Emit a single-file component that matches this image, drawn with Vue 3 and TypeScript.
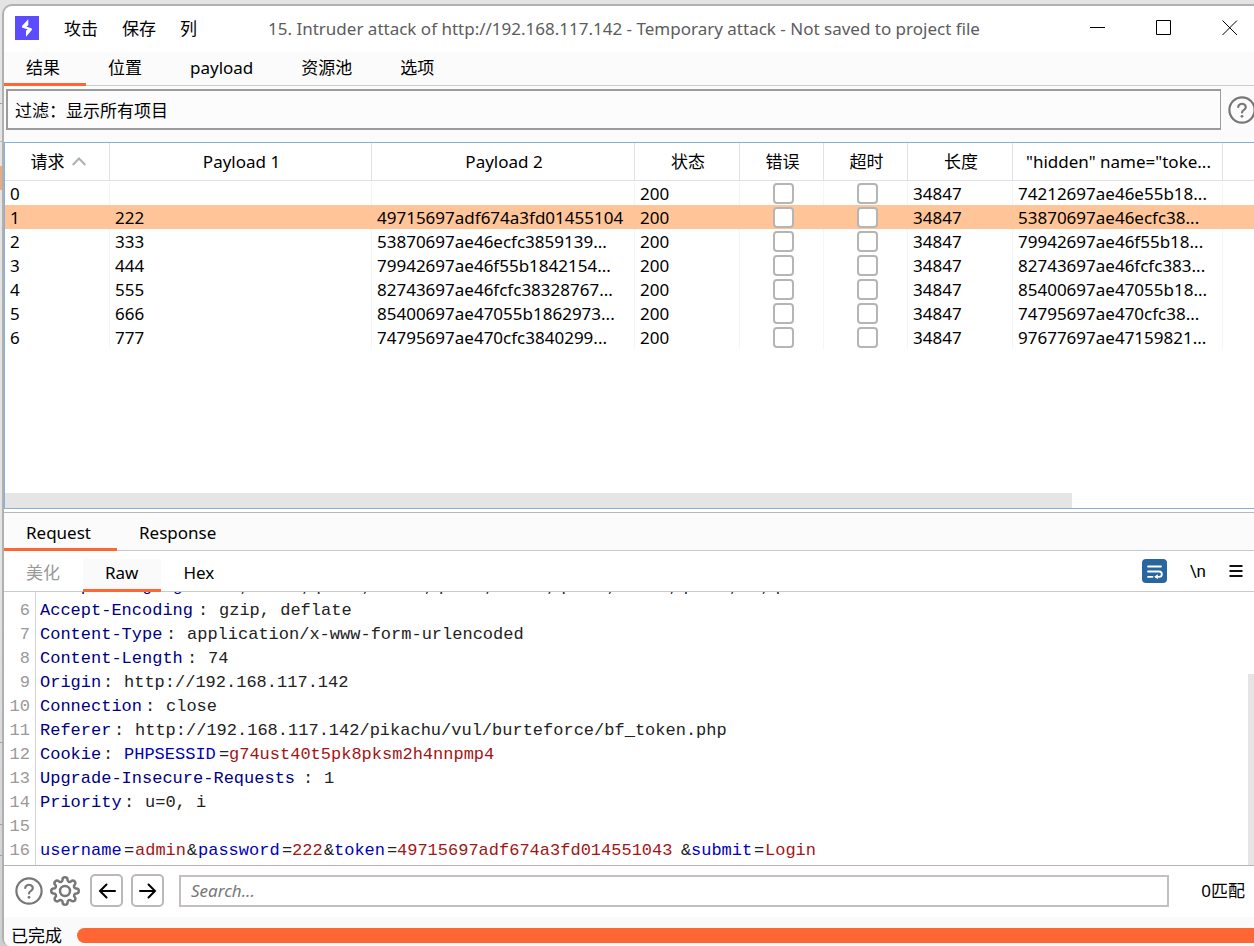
<script setup lang="ts">
import { ref } from 'vue'

interface Row {
  id: number
  p1: string
  p2: string
  status: string
  error: boolean
  timeout: boolean
  length: string
  token: string
}

interface Token {
  kind: 'name' | 'param' | 'value' | 'text'
  text: string
}

interface Line {
  no: number
  tokens: Token[]
}

const mainTabs = ['结果', '位置', 'payload', '资源池', '选项']
const activeMain = ref('结果')
const messageTabs = ['Request', 'Response']
const activeMessage = ref('Request')
const viewTabs = ['美化', 'Raw', 'Hex']
const activeView = ref('Raw')
const selected = ref(1)
const search = ref('')

const columns = ['请求', 'Payload 1', 'Payload 2', '状态', '错误', '超时', '长度', '"hidden" name="toke...', '']

function row(id: number, p1: string, p2: string, token: string): Row {
  return { id, p1, p2, status: '200', error: false, timeout: false, length: '34847', token }
}

const rows = ref<Row[]>([
  row(0, '', '', '74212697ae46e55b18...'),
  row(1, '222', '49715697adf674a3fd01455104', '53870697ae46ecfc38...'),
  row(2, '333', '53870697ae46ecfc3859139...', '79942697ae46f55b18...'),
  row(3, '444', '79942697ae46f55b1842154...', '82743697ae46fcfc383...'),
  row(4, '555', '82743697ae46fcfc38328767...', '85400697ae47055b18...'),
  row(5, '666', '85400697ae47055b1862973...', '74795697ae470cfc38...'),
  row(6, '777', '74795697ae470cfc3840299...', '97677697ae47159821...'),
])

const t = (kind: Token['kind'], text: string): Token => ({ kind, text })
const header = (no: number, name: string, value: string): Line => ({
  no,
  tokens: [t('name', name), t('text', ': '), t('text', value)],
})

const lines: Line[] = [
  header(5, 'Accept-Language', 'zh,zh-CN;q=0.8,zh-TW;q=0.7,zh-HK;q=0.5,en-US;q=0.3,en;q=0.2'),
  header(6, 'Accept-Encoding', 'gzip, deflate'),
  header(7, 'Content-Type', 'application/x-www-form-urlencoded'),
  header(8, 'Content-Length', '74'),
  header(9, 'Origin', 'http://192.168.117.142'),
  header(10, 'Connection', 'close'),
  header(11, 'Referer', 'http://192.168.117.142/pikachu/vul/burteforce/bf_token.php'),
  {
    no: 12,
    tokens: [
      t('name', 'Cookie'),
      t('text', ': '),
      t('param', 'PHPSESSID'),
      t('text', '='),
      t('value', 'g74ust40t5pk8pksm2h4nnpmp4'),
    ],
  },
  header(13, 'Upgrade-Insecure-Requests', '1'),
  header(14, 'Priority', 'u=0, i'),
  { no: 15, tokens: [] },
  {
    no: 16,
    tokens: [
      t('param', 'username'),
      t('text', '='),
      t('value', 'admin'),
      t('text', '&'),
      t('param', 'password'),
      t('text', '='),
      t('value', '222'),
      t('text', '&'),
      t('param', 'token'),
      t('text', '='),
      t('value', '49715697adf674a3fd014551043'),
      t('text', '&'),
      t('param', 'submit'),
      t('text', '='),
      t('value', 'Login'),
    ],
  },
]

// Two editor cells span 21px; each token snaps to the whole pixel nearest its column.
const column = (chars: number) => Math.round((chars * 21) / 2)
function advance(line: Line, index: number) {
  const start = line.tokens.slice(0, index).reduce((sum, k) => sum + k.text.length, 0)
  const end = start + line.tokens[index].text.length
  return { width: `${column(end) - column(start)}px` }
}
</script>

<template>
  <div class="desktop">
    <main class="window">
      <header class="titlebar">
        <svg class="logo" viewBox="0 0 24 24" aria-hidden="true">
          <rect width="24" height="24" fill="#5b4dff" />
          <path d="M13.3 3.3v6l-2 1.300 5.500 2v1.500L11 20.700v-6l1.800-1.100-5.800-2.200v-1.300z" fill="#fff" />
        </svg>
        <nav class="menu">
          <button type="button">攻击</button>
          <button type="button">保存</button>
          <button type="button">列</button>
        </nav>
        <h1>15. Intruder attack of http://192.168.117.142 - Temporary attack - Not saved to project file</h1>
        <div class="winctl">
          <button type="button" aria-label="Minimize">
            <svg viewBox="0 0 16 16"><path d="M0 7.5h15" /></svg>
          </button>
          <button type="button" aria-label="Maximize">
            <svg viewBox="0 0 16 16"><path d="M.5.5h14v14H.5z" /></svg>
          </button>
          <button type="button" aria-label="Close">
            <svg viewBox="0 0 16 16"><path d="M.5.5l14.5 14.5M15 .5L.5 15" /></svg>
          </button>
        </div>
      </header>

      <nav class="tabs main-tabs">
        <button
          v-for="tab in mainTabs"
          :key="tab"
          type="button"
          :class="{ active: tab === activeMain }"
          @click="activeMain = tab"
        >{{ tab }}</button>
      </nav>

      <div class="filter-row">
        <button type="button" class="filter">过滤：显示所有项目</button>
        <button type="button" class="icon-btn" aria-label="Help">
          <svg class="help" viewBox="0 0 28 28">
            <circle cx="14" cy="14" r="12.6" />
            <path d="M10.2 11a3.8 3.3 0 1 1 5.8 2.900c-1.300.8-2 1.300-2 2.600" />
            <circle class="dot" cx="14" cy="20.3" r="1.4" />
          </svg>
        </button>
      </div>

      <section class="results">
        <table>
          <colgroup>
            <col class="w-first" /><col class="w-pay1" /><col class="w-pay2" /><col class="w-req" />
            <col class="w-chk" /><col class="w-chk" /><col class="w-req" /><col class="w-tok" /><col />
          </colgroup>
          <thead>
            <tr>
              <th v-for="(c, i) in columns" :key="i" scope="col">
                <span>{{ c }}</span>
                <svg v-if="i === 0" class="sort" viewBox="0 0 14 9" aria-hidden="true">
                  <path d="M.7 8L7 1.5 13.3 8" />
                </svg>
              </th>
            </tr>
          </thead>
          <tbody>
            <tr v-for="r in rows" :key="r.id" :class="{ selected: r.id === selected }" @click="selected = r.id">
              <td>{{ r.id }}</td>
              <td>{{ r.p1 }}</td>
              <td>{{ r.p2 }}</td>
              <td>{{ r.status }}</td>
              <td class="check"><input v-model="r.error" type="checkbox" :aria-label="'错误 ' + r.id" /></td>
              <td class="check"><input v-model="r.timeout" type="checkbox" :aria-label="'超时 ' + r.id" /></td>
              <td>{{ r.length }}</td>
              <td>{{ r.token }}</td>
              <td></td>
            </tr>
          </tbody>
        </table>
        <div class="hscroll"></div>
      </section>

      <nav class="tabs message-tabs">
        <button
          v-for="tab in messageTabs"
          :key="tab"
          type="button"
          :class="{ active: tab === activeMessage }"
          @click="activeMessage = tab"
        >{{ tab }}</button>
      </nav>

      <div class="view-bar">
        <nav class="view-tabs">
          <button
            v-for="(tab, i) in viewTabs"
            :key="tab"
            type="button"
            :disabled="i === 0"
            :class="{ active: tab === activeView }"
            @click="activeView = tab"
          >{{ tab }}</button>
        </nav>
        <div class="view-tools">
          <button type="button" class="wrap" aria-label="Wrap lines">
            <svg viewBox="0 0 25 24">
              <path d="M6 7.5h13M6 12.5h11.2a2.6 2.6 0 0 1 0 5.3H14M6 17.8h4.5" />
              <path class="solid" d="M12.2 17.8l3.6-2.5v5z" />
            </svg>
          </button>
          <button type="button" class="newline">\n</button>
          <button type="button" aria-label="Menu">
            <svg class="burger" viewBox="0 0 14 12"><path d="M.5 1h13M.5 6h13M.5 11h13" /></svg>
          </button>
        </div>
      </div>

      <section class="editor">
        <div class="code">
          <div v-for="l in lines" :key="l.no" class="line">
            <span class="no">{{ l.no }}</span>
            <code><span
              v-for="(k, i) in l.tokens"
              :key="i"
              :class="k.kind"
              :style="advance(l, i)"
            >{{ k.text }}</span></code>
          </div>
        </div>
        <div class="vscroll"><div></div></div>
      </section>

      <form class="searchbar" @submit.prevent>
        <button type="button" class="icon-btn" aria-label="Help">
          <svg class="help" viewBox="0 0 28 28">
            <circle cx="14" cy="14" r="12.6" />
            <path d="M10.2 11a3.8 3.3 0 1 1 5.8 2.900c-1.300.8-2 1.300-2 2.600" />
            <circle class="dot" cx="14" cy="20.3" r="1.4" />
          </svg>
        </button>
        <button type="button" class="icon-btn" aria-label="Settings">
          <svg class="gear" viewBox="0 0 24 24">
            <circle cx="12" cy="12" r="4" />
            <path d="M19.4 15a1.65 1.65 0 0 0 .33 1.82l.06.06a2 2 0 1 1-2.83 2.83l-.06-.06a1.65 1.65 0 0 0-1.82-.33 1.65 1.65 0 0 0-1 1.51V21a2 2 0 0 1-4 0v-.09A1.65 1.65 0 0 0 9 19.4a1.65 1.65 0 0 0-1.82.33l-.06.06a2 2 0 1 1-2.83-2.83l.06-.06a1.65 1.65 0 0 0 .33-1.82 1.65 1.65 0 0 0-1.51-1H3a2 2 0 0 1 0-4h.09A1.65 1.65 0 0 0 4.6 9a1.65 1.65 0 0 0-.33-1.82l-.06-.06a2 2 0 1 1 2.83-2.83l.06.06a1.65 1.65 0 0 0 1.82.33H9a1.65 1.65 0 0 0 1-1.51V3a2 2 0 0 1 4 0v.09a1.65 1.65 0 0 0 1 1.51 1.65 1.65 0 0 0 1.82-.33l.06-.06a2 2 0 1 1 2.83 2.83l-.06.06a1.65 1.65 0 0 0-.33 1.82V9a1.65 1.65 0 0 0 1.51 1H21a2 2 0 0 1 0 4h-.09a1.65 1.65 0 0 0-1.51 1z" />
          </svg>
        </button>
        <button type="button" class="step" aria-label="Previous match">
          <svg viewBox="0 0 18 18"><path d="M17 9H2M8.5 2.5L2 9l6.5 6.5" /></svg>
        </button>
        <button type="button" class="step" aria-label="Next match">
          <svg viewBox="0 0 18 18"><path d="M1 9h15M9.5 2.5L16 9l-6.5 6.5" /></svg>
        </button>
        <input v-model="search" type="text" placeholder="Search..." aria-label="Search" />
        <output>0匹配</output>
      </form>

      <footer class="status">
        <span id="status-label">已完成</span>
        <div class="bar" role="progressbar" aria-labelledby="status-label" aria-valuenow="100"></div>
      </footer>
    </main>
  </div>
</template>

<style>
body {
  background: #e4e4e4;
  overflow: hidden;
}
</style>

<style scoped>
.desktop {
  box-sizing: border-box;
  min-height: 100vh;
  padding: 4px 0 0 2px;
  display: flex;
  font-family: "Noto Sans", "Noto Sans CJK SC", sans-serif;
  font-size: 17px;
  line-height: 24px;
  color: #000;
  background:
    linear-gradient(#e3ad87, #e3ad87) 0 166px / 4px 24px no-repeat,
    linear-gradient(#a0a0a0, #a0a0a0) 0 103px / 4px 1px no-repeat,
    linear-gradient(#b5b9b8, #b5b9b8) 0 141px / 4px 1px no-repeat,
    linear-gradient(#a0a0a0, #a0a0a0) 0 742px / 4px 1px no-repeat,
    linear-gradient(#a0a0a0, #a0a0a0) 0 824px / 4px 1px no-repeat,
    linear-gradient(#a0a0a0, #a0a0a0) 0 855px / 4px 1px no-repeat,
    linear-gradient(#e4e4e4 0 60%, #cfcfcf);
}
button,
input {
  font: inherit;
  color: inherit;
}
button {
  padding: 0;
  border: 0;
  background: none;
}
svg {
  display: block;
}
.window {
  flex: 1;
  min-width: 0;
  display: flex;
  flex-direction: column;
  overflow: hidden;
  background: #fff;
  border: solid #b0b0b0;
  border-width: 2px 0 0 2px;
  border-radius: 10px 0 0 8px;
}
.titlebar {
  height: 46px;
  padding-left: 11px;
  display: flex;
  align-items: center;
}
.logo {
  width: 24px;
  height: 24px;
  margin-bottom: 2px;
}
.menu {
  display: flex;
  gap: 24px;
  margin-left: 25px;
}
h1 {
  flex: 1;
  margin: 0 0 0 71px;
  font-size: 17px;
  font-weight: 400;
  white-space: nowrap;
  color: #5c5c5c;
}
.winctl {
  display: flex;
  gap: 50px;
  padding: 0 16px 2px 0;
}
.winctl svg {
  width: 16px;
  height: 16px;
  fill: none;
  stroke: #000;
}
.tabs {
  display: flex;
  background: #fbfbfb;
  border-bottom: 1px solid #c8cccb;
}
.tabs button {
  height: 21px;
  padding: 4px 26px 6px 22px;
  border-bottom: 3px solid transparent;
  margin-bottom: -1px;
  box-sizing: content-box;
  line-height: 24px;
}
.tabs .active {
  border-bottom-color: #ff6633;
}
.filter-row {
  display: flex;
  align-items: center;
  gap: 7px;
  padding: 3px 0 12px 2px;
  margin-right: -2px;
  background: #fbfbfb;
}
.filter {
  flex: 1;
  height: 41px;
  padding: 2px 7px 0;
  text-align: left;
  border: 2px solid #9c9c9c;
  border-right-width: 1px;
  background: #fcfcfc;
}
.icon-btn {
  flex: none;
}
.help,
.gear {
  width: 28px;
  height: 28px;
  fill: none;
  stroke: #777;
  stroke-width: 2.2;
  stroke-linecap: round;
}
.gear {
  width: 30px;
  height: 30px;
  stroke-width: 2;
}
.dot {
  fill: #777;
  stroke: none;
}
.results {
  flex: 365 1 0;
  min-height: 200px;
  display: flex;
  flex-direction: column;
  justify-content: space-between;
  border: 1px solid #86b0dc;
  border-right: 0;
}
table {
  width: 100%;
  table-layout: fixed;
  border-collapse: separate;
  border-spacing: 0;
}
.w-first { width: 105px; }
.w-pay1 { width: 262px; }
.w-pay2 { width: 263px; }
.w-req { width: 105px; }
.w-chk { width: 84px; }
.w-tok { width: 210px; }
th {
  height: 37px;
  padding: 0 0 0 2px;
  font-weight: 400;
  white-space: nowrap;
  border-right: 1px solid #e2e2e2;
  border-bottom: 1px solid #e2e2e2;
}
th:last-child,
td:last-child {
  border-right: 0;
}
.sort {
  display: inline-block;
  width: 14px;
  height: 9px;
  margin-left: 7px;
  vertical-align: 2px;
  fill: none;
  stroke: #b0b0b0;
  stroke-width: 2;
}
td {
  height: 22px;
  padding: 2px 0 0 5px;
  line-height: 22px;
  white-space: nowrap;
  border-right: 1px solid #f5f5f5;
}
.check {
  height: 24px;
  padding: 0 0 0 4px;
}
.check input {
  appearance: none;
  display: block;
  box-sizing: border-box;
  width: 21px;
  height: 21px;
  margin: 0 auto;
  border: 2px solid #b5b5b5;
  border-radius: 4px;
  background: #fff;
}
.selected td {
  background: #ffc599;
  border-right-color: #ffc599;
}
.hscroll {
  width: 1067px;
  max-width: 86%;
  height: 15px;
  background: #e5e5e5;
}
.message-tabs {
  margin-top: 3px;
  border-top: 1px solid #b8b8b8;
}
.message-tabs button {
  padding: 8px 26px 6px 22px;
}
.view-bar {
  display: flex;
  justify-content: space-between;
  align-items: center;
  height: 40px;
  border-bottom: 1px solid #c8cccb;
}
.view-tabs {
  display: flex;
  align-self: flex-end;
}
.view-tabs button {
  height: 33px;
  margin-bottom: -1px;
  padding: 0 23px 2px 22px;
  border-bottom: 3px solid transparent;
}
.view-tabs .active {
  background: #fafafa;
  border-bottom-color: #ff6633;
}
.view-tabs button:disabled {
  color: #999;
}
.view-tools {
  display: flex;
  align-items: center;
  gap: 23px;
  padding-right: 11px;
}
.wrap {
  border-radius: 4px;
  background: #28669f;
}
.wrap svg {
  width: 25px;
  height: 24px;
  fill: none;
  stroke: #fff;
  stroke-width: 1.8;
  stroke-linecap: round;
}
.wrap .solid {
  fill: #fff;
  stroke: none;
}
.newline {
  font-family: Roboto, sans-serif;
}
.burger {
  width: 14px;
  height: 12px;
  fill: none;
  stroke: #111;
  stroke-width: 2;
}
.editor {
  flex: 273 1 0;
  min-height: 120px;
  display: flex;
  border-bottom: 1px solid #b8b4b4;
}
.code {
  flex: 1;
  min-width: 0;
  display: flex;
  flex-direction: column;
  justify-content: flex-end;
  overflow: hidden;
  font-family: "Liberation Mono", monospace;
}
.line {
  flex: none;
  display: flex;
  height: 24px;
  line-height: 26px;
}
.line:last-child {
  height: 27px;
}
.no {
  width: 26px;
  padding-right: 5px;
  text-align: right;
  color: #999;
  border-right: 1px solid #d5d5d5;
}
code {
  padding-left: 4px;
  display: flex;
  font: inherit;
  white-space: pre;
}
.name { color: #00007f; }
.param { color: #0000b8; }
.value { color: #a31515; }
.text { color: #222; }
.vscroll {
  width: 6px;
  display: flex;
  flex-direction: column;
  justify-content: flex-end;
}
.vscroll div {
  height: 70%;
  background: #e5e5e5;
}
.searchbar {
  height: 51px;
  padding: 0 9px 2px 11px;
  box-sizing: border-box;
  display: flex;
  align-items: center;
}
.searchbar .icon-btn + .icon-btn {
  margin-left: 7px;
}
.step {
  box-sizing: border-box;
  width: 33px;
  height: 33px;
  margin-left: 10px;
  display: grid;
  place-items: center;
  border: 2px solid #bdb8b8;
  border-radius: 5px;
}
.step + .step {
  margin-left: 8px;
}
.step svg {
  width: 18px;
  height: 18px;
  fill: none;
  stroke: #000;
  stroke-width: 2;
  stroke-linecap: round;
}
.searchbar input {
  box-sizing: border-box;
  flex: 1;
  min-width: 0;
  height: 32px;
  margin: 0 32px 0 15px;
  padding: 0 10px;
  border: 2px solid #c4c0c0;
  outline: 0;
}
.searchbar input::placeholder {
  color: #777;
  font-style: italic;
}
.status {
  height: 29px;
  padding: 8px 0 0 7px;
  box-sizing: border-box;
  display: flex;
  align-items: center;
  gap: 15px;
  background: #fafafa;
  white-space: nowrap;
}
.bar {
  flex: 1;
  height: 15px;
  border-radius: 8px 0 0 8px;
  background: #ff6633;
}
</style>
